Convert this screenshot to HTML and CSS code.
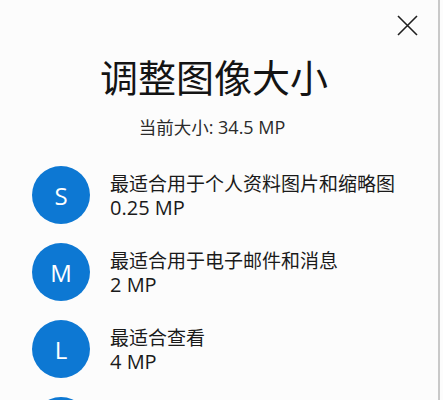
FILE: index.html
```html
<!DOCTYPE html>
<html lang="zh-CN">
<head>
<meta charset="utf-8">
<title>调整图像大小</title>
<link rel="stylesheet" href="styles.css">
</head>
<body>
<div class="frame">
  <div class="dialog">
    <div class="header">
      <button class="close" aria-label="关闭">
        <svg width="21" height="21" viewBox="0 0 21 21"><path d="M1 1 L20 20 M20 1 L1 20" stroke="#1f1f1f" stroke-width="1.6" fill="none"/></svg>
      </button>
    </div>
    <h1 class="title">调整图像大小</h1>
    <p class="current">当前大小<span class="latin">: 34.5 MP</span></p>
    <ul class="options">
      <li class="option">
        <span class="badge">S</span>
        <div class="info">
          <div class="desc">最适合用于个人资料图片和缩略图</div>
          <div class="size">0.25 MP</div>
        </div>
      </li>
      <li class="option">
        <span class="badge">M</span>
        <div class="info">
          <div class="desc">最适合用于电子邮件和消息</div>
          <div class="size">2 MP</div>
        </div>
      </li>
      <li class="option">
        <span class="badge">L</span>
        <div class="info">
          <div class="desc">最适合查看</div>
          <div class="size">4 MP</div>
        </div>
      </li>
      <li class="option">
        <span class="badge"></span>
      </li>
    </ul>
  </div>
  <div class="edge"></div>
</div>
</body>
</html>
```
FILE: styles.css
```css
html, body {
  margin: 0;
  padding: 0;
  background: #fcfcfc;
  height: 100%;
  overflow: hidden;
}
body {
  font-family: "Noto Sans CJK SC", "Noto Sans", sans-serif;
  color: #1a1a1a;
}
.frame {
  display: flex;
  height: 400px;
}
.dialog {
  width: 438px;
  background: #fcfcfc;
}
.edge {
  width: 2px;
  background: #c9c9c9;
}
.header {
  display: flex;
  justify-content: flex-end;
  padding: 14px 20px 0 0;
  height: 22px;
}
.close {
  width: 22px;
  height: 22px;
  padding: 0;
  margin: 0;
  border: none;
  background: transparent;
  display: flex;
  align-items: center;
  justify-content: center;
}
.title {
  margin: 15px 10px 0 0;
  text-align: center;
  font-size: 38px;
  font-weight: 400;
  line-height: 50px;
  color: #141414;
}
.current {
  margin: 14px 14px 0 0;
  text-align: center;
  font-size: 17.5px;
  line-height: 24px;
  color: #2a2a2a;
}
.latin {
  font-family: "Open Sans", "Noto Sans", sans-serif;
  font-size: 18px;
}
.options {
  list-style: none;
  margin: 27px 0 0 0;
  padding: 0 0 0 32px;
  display: flex;
  flex-direction: column;
  gap: 19px;
}
.option {
  display: flex;
  align-items: center;
  gap: 20px;
  height: 58px;
}
.badge {
  flex: none;
  width: 58px;
  height: 58px;
  border-radius: 50%;
  background: #0d78d3;
  color: #ffffff;
  display: flex;
  align-items: center;
  justify-content: center;
  font-family: "Open Sans", "Noto Sans", sans-serif;
  font-size: 24px;
}
.info {
  display: flex;
  flex-direction: column;
}
.desc {
  font-size: 19px;
  line-height: 25px;
  color: #1a1a1a;
}
.size {
  font-family: "Open Sans", "Noto Sans", sans-serif;
  font-size: 20px;
  line-height: 26px;
  color: #1a1a1a;
}
```
